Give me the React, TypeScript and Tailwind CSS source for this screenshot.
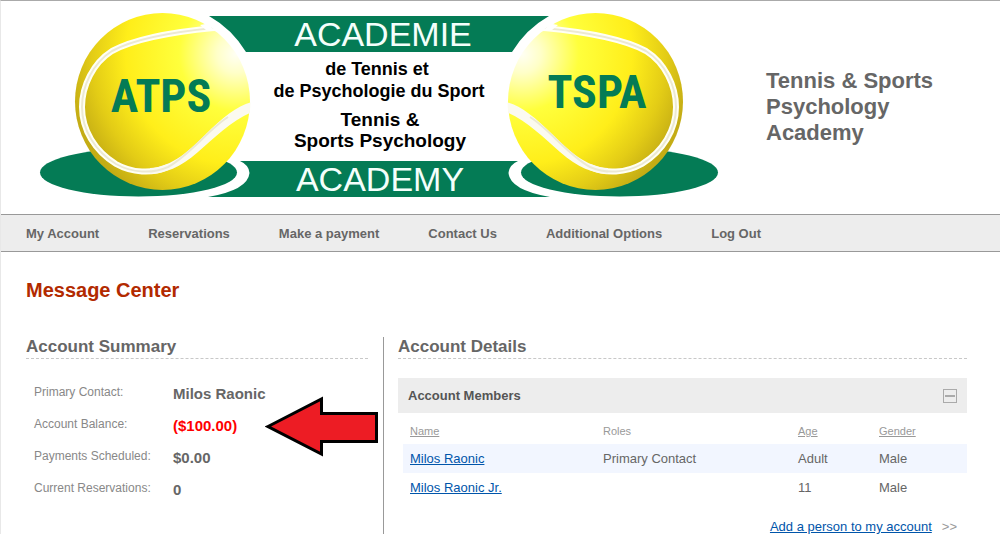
interface Member {
  name: string;
  role: string;
  age: string;
  gender: string;
}

const NAV_ITEMS = [
  "My Account",
  "Reservations",
  "Make a payment",
  "Contact Us",
  "Additional Options",
  "Log Out",
];

const SUMMARY = [
  { label: "Primary Contact:", value: "Milos Raonic" },
  { label: "Account Balance:", value: "($100.00)", negative: true },
  { label: "Payments Scheduled:", value: "$0.00" },
  { label: "Current Reservations:", value: "0" },
];

const MEMBERS: Member[] = [
  { name: "Milos Raonic", role: "Primary Contact", age: "Adult", gender: "Male" },
  { name: "Milos Raonic Jr.", role: "", age: "11", gender: "Male" },
];

// ── Logo ─────────────────────────────────────────────────────────────────────

// One half of the logo; the other half is the same drawing mirrored.
function LogoHalf() {
  const seam =
    "M214 28 C172 32 134 39 112 51 C93 63 82 86 82 107 C82 130 95 151 116 164 C132 173 152 174 168 167";
  return (
    <g>
      <path d="M209 16 H380 V52 H246 Q232 29 209 16 Z" fill="#047b55" />
      <path d="M240 161 H380 V197 H208 Q248 190 249.500 173 Q249 165 240 161 Z" fill="#047b55" />
      <ellipse cx="138.500" cy="172.500" rx="98.500" ry="24" fill="#047b55" />
      <ellipse cx="162.500" cy="101.500" rx="87.500" ry="88.500" fill="url(#ball)" />
      <g clipPath="url(#ball-clip)">
        <path d={seam} fill="none" stroke="#fffff4" strokeWidth="6" />
        <path
          d="M150 168 C172 167 190 150 206 134 C222 118 238 105 252 102 V112 C232 120 214 138 198 152 C180 168 165 173 150 174 Z"
          fill="#fbfaf0"
        />
        <path
          d={seam + " C190 155 210 128 228 117"}
          fill="none"
          stroke="#ece9d2"
          strokeWidth="2"
        />
        <path d="M200 25 L216 22 L222 32 L206 30 Z" fill="#fff" />
      </g>
    </g>
  );
}

function Logo() {
  return (
    <svg
      viewBox="40 12 680 186"
      className="w-[680px] shrink-0 overflow-visible"
      role="img"
      aria-label="ATPS TSPA"
      textAnchor="middle"
    >
      <defs>
        <radialGradient id="ball" gradientUnits="userSpaceOnUse" cx="236" cy="54" r="190">
          <stop offset="0" stopColor="#fffff4" />
          <stop offset="0.1" stopColor="#ffffc8" />
          <stop offset="0.3" stopColor="#ffff3c" />
          <stop offset="0.58" stopColor="#ffee1a" />
          <stop offset="0.76" stopColor="#e3cc16" />
          <stop offset="0.9" stopColor="#c4ac14" />
          <stop offset="1" stopColor="#c9b116" />
        </radialGradient>
        <clipPath id="ball-clip">
          <ellipse cx="162.500" cy="101.500" rx="88" ry="89" />
        </clipPath>
      </defs>
      <LogoHalf />
      <g transform="matrix(-1 0 0 1 758 0)">
        <LogoHalf />
      </g>
      <g
        className="font-['Roboto_Condensed','Open_Sans_Condensed','Liberation_Sans',sans-serif] text-[46px] font-bold"
        fill="#047b55"
      >
        <text x="161" y="112">ATPS</text>
        <text x="597" y="108">TSPA</text>
      </g>
      <g className="text-[34px]" fill="#f4fffb">
        <text x="383" y="46">ACADEMIE</text>
        <text x="380" y="191">ACADEMY</text>
      </g>
      <g className="text-[18px] font-bold" fill="#000">
        <text x="377" y="75">de Tennis et</text>
        <text x="379" y="97">de Psychologie du Sport</text>
      </g>
      <g className="text-[19px] font-bold" fill="#000">
        <text x="380" y="126">Tennis &amp;</text>
        <text x="380" y="147">Sports Psychology</text>
      </g>
    </svg>
  );
}

// ── Account summary ──────────────────────────────────────────────────────────

function Arrow() {
  return (
    <svg
      width="114"
      height="62"
      viewBox="0 0 114 62"
      className="absolute top-9 left-[239px]"
      aria-hidden="true"
    >
      <path
        d="M3 31.500 L56.500 4 V18.500 H111.500 V46.500 H56.500 V59 Z"
        fill="#ed1c24"
        stroke="#000"
        strokeWidth="3"
      />
    </svg>
  );
}

function AccountSummary() {
  return (
    <section className="pr-[15px]">
      <h2 className="border-b border-dashed border-[#c8c8c8] pb-px text-[17px] leading-5 font-bold">
        Account Summary
      </h2>
      <div className="relative pt-[17px] pl-2">
        <dl>
          {SUMMARY.map((row) => (
            <div key={row.label} className="flex h-8">
              <dt className="w-[139px] text-[12px] leading-8 text-[#888]">{row.label}</dt>
              <dd
                className={`pt-[2px] text-[15px] leading-8 font-bold ${
                  row.negative ? "text-[#f00]" : ""
                }`}
              >
                {row.value}
              </dd>
            </div>
          ))}
        </dl>
        <Arrow />
      </div>
    </section>
  );
}

// ── Account details ──────────────────────────────────────────────────────────

function AccountDetails() {
  return (
    <section className="border-l border-[#999] pl-[14px]">
      <h2 className="border-b border-dashed border-[#c8c8c8] pb-px text-[17px] leading-5 font-bold">
        Account Details
      </h2>
      <div className="mt-[19px] flex h-[35px] items-center justify-between bg-[#ededed] px-[10px]">
        <h3 className="text-[13px] font-bold text-[#555]">Account Members</h3>
        <button
          type="button"
          aria-label="Collapse"
          className="flex size-[14px] items-center justify-center border border-[#aaa]"
        >
          <span className="h-[2px] w-[10px] bg-[#aaa]" />
        </button>
      </div>
      <div className="pl-[5px]">
        <table className="w-full table-fixed text-left text-[13px]">
          <thead>
            <tr className="h-[31px] text-[11px] text-[#999]">
              <th className="w-[193px] pt-[6px] pl-[7px] font-normal">
                <a href="#name" className="underline">Name</a>
              </th>
              <th className="w-[195px] pt-[6px] pl-[7px] font-normal">Roles</th>
              <th className="w-[81px] pt-[6px] pl-[7px] font-normal">
                <a href="#age" className="underline">Age</a>
              </th>
              <th className="pt-[6px] pl-[7px] font-normal">
                <a href="#gender" className="underline">Gender</a>
              </th>
            </tr>
          </thead>
          <tbody>
            {MEMBERS.map((m) => (
              <tr key={m.name} className="h-[29px] odd:bg-[#f2f6ff]">
                <td className="pl-[7px]">
                  <a href="#member" className="text-[#0055aa] underline">{m.name}</a>
                </td>
                <td className="pl-[7px]">{m.role}</td>
                <td className="pl-[7px]">{m.age}</td>
                <td className="pl-[7px]">{m.gender}</td>
              </tr>
            ))}
          </tbody>
        </table>
        <div className="flex justify-end gap-[10px] pt-[15px] pr-[10px] text-[13px] leading-5">
          <a href="#add" className="text-[#0055aa] underline">Add a person to my account</a>
          <span className="text-[#999]">&gt;&gt;</span>
        </div>
      </div>
    </section>
  );
}

export default function App() {
  return (
    <div className="h-screen overflow-hidden border-t border-l border-t-[#aaa] border-l-[#e8e8e8] bg-white font-['Liberation_Sans',Arial,sans-serif] text-[#666]">
      <header className="flex items-start pt-[11px] pb-4 pl-[39px]">
        <Logo />
        <h1 className="ml-[46px] w-[180px] pt-14 text-[22px] leading-[26px] font-bold">
          Tennis &amp; Sports Psychology Academy
        </h1>
      </header>

      <nav className="flex h-[38px] items-center gap-[49px] border-y border-[#999] bg-[#ededed] pt-[2px] pl-[25px] text-[13px] font-bold whitespace-nowrap">
        {NAV_ITEMS.map((item) => (
          <a key={item} href="#nav">{item}</a>
        ))}
      </nav>

      <main className="pt-[26px] pr-[33px] pl-[25px]">
        <p role="heading" aria-level={1} className="text-[20px] leading-6 font-bold text-[#b22a00]">
          Message Center
        </p>
        <div className="mt-[35px] grid min-h-[240px] grid-cols-[357px_1fr]">
          <AccountSummary />
          <AccountDetails />
        </div>
      </main>
    </div>
  );
}
